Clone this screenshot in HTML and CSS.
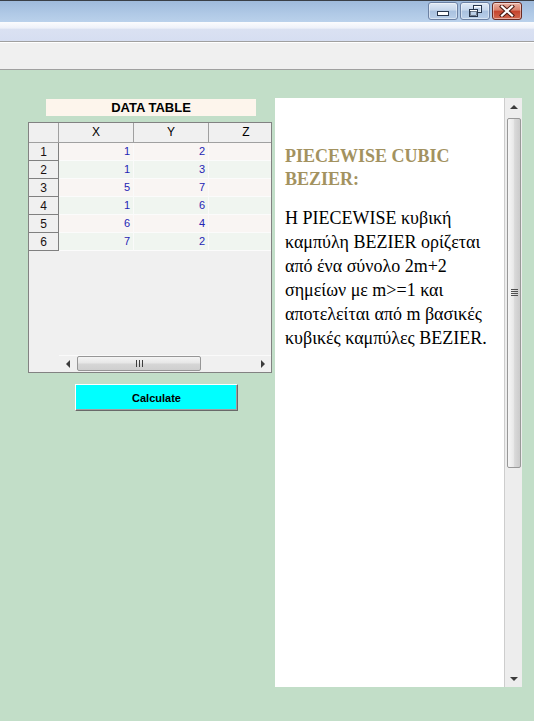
FILE: index.html
```html
<!DOCTYPE html>
<html lang="el">
<head>
<meta charset="utf-8">
<title>Piecewise Cubic Bezier</title>
<link rel="stylesheet" href="styles.css">
</head>
<body>
<div class="window">
  <div class="titlebar">
    <div class="tb-btn">
      <svg width="12" height="6" viewBox="0 0 12 6"><rect x="0.5" y="0.5" width="11" height="4" fill="#ffffff" stroke="#27364c"/></svg>
    </div>
    <div class="tb-btn">
      <svg width="13" height="12" viewBox="0 0 13 12">
        <rect x="4.5" y="0.5" width="8" height="7" fill="#ffffff" stroke="#27364c"/>
        <rect x="5.5" y="2.5" width="6" height="4" fill="#bcd0e8"/>
        <rect x="0.5" y="4.5" width="8" height="7" fill="#ffffff" stroke="#27364c"/>
        <rect x="1.5" y="6.5" width="6" height="4" fill="#bcd0e8" stroke="#27364c" stroke-width="0.6"/>
      </svg>
    </div>
    <div class="tb-btn close">
      <svg width="16" height="12" viewBox="0 0 16 12">
        <path d="M3 1.5 L13 10.5 M13 1.5 L3 10.5" stroke="#4a1a12" stroke-width="4.2" stroke-linecap="square"/>
        <path d="M3 1.5 L13 10.5 M13 1.5 L3 10.5" stroke="#ffffff" stroke-width="2.2" stroke-linecap="square"/>
      </svg>
    </div>
  </div>
  <div class="menubar"></div>
  <div class="toolbar"></div>

  <div class="content">
    <div class="left">
      <div class="dt-label">DATA TABLE</div>
      <div class="grid">
        <div class="cells">
          <div class="hd corner"></div>
          <div class="hd">X</div>
          <div class="hd">Y</div>
          <div class="hd">Z</div>

          <div class="rh">1</div><div class="dc odd">1</div><div class="dc odd">2</div><div class="dc odd"></div>
          <div class="rh">2</div><div class="dc even">1</div><div class="dc even">3</div><div class="dc even"></div>
          <div class="rh">3</div><div class="dc odd">5</div><div class="dc odd">7</div><div class="dc odd"></div>
          <div class="rh">4</div><div class="dc even">1</div><div class="dc even">6</div><div class="dc even"></div>
          <div class="rh">5</div><div class="dc odd">6</div><div class="dc odd">4</div><div class="dc odd"></div>
          <div class="rh">6</div><div class="dc even">7</div><div class="dc even">2</div><div class="dc even"></div>
        </div>
        <div class="hscroll">
          <div class="sb-arrow"><span class="tri-left"></span></div>
          <div class="h-thumb"><span class="grip-v"></span></div>
          <div class="h-track"></div>
          <div class="sb-arrow"><span class="tri-right"></span></div>
        </div>
      </div>
      <button class="calc" type="button">Calculate</button>
    </div>

    <div class="panel">
      <div class="ptext">
        <h2 class="ptitle">PIECEWISE CUBIC<br>BEZIER:</h2>
        <p class="pbody">Η PIECEWISE κυβική<br>καμπύλη BEZIER ορίζεται<br>από ένα σύνολο 2m+2<br>σημείων με m&gt;=1 και<br>αποτελείται από m βασικές<br>κυβικές καμπύλες BEZIER.</p>
      </div>
      <div class="vscroll">
        <div class="v-arrow"><span class="tri-up"></span></div>
        <div class="v-thumb"><span class="grip-h"></span></div>
        <div class="v-track"></div>
        <div class="v-arrow"><span class="tri-down"></span></div>
      </div>
    </div>
  </div>
</div>
</body>
</html>
```

FILE: styles.css
```css
* { box-sizing: border-box; }
html, body { margin: 0; padding: 0; }
body {
  width: 534px;
  height: 721px;
  overflow: hidden;
  background: #c2dec8;
  font-family: "Liberation Sans", Arial, sans-serif;
}
.window { width: 534px; height: 721px; display: flex; flex-direction: column; }

/* title bar */
.titlebar {
  height: 22px;
  flex: none;
  border-top: 1px solid #3a3f46;
  background: linear-gradient(#9fbadb, #b0c9e6 60%, #bad1eb);
  display: flex;
  justify-content: flex-end;
  align-items: flex-start;
  gap: 2px;
  padding: 1px 12px 0 0;
}
.tb-btn {
  width: 30px;
  height: 18px;
  border: 1px solid #6c81a3;
  border-radius: 3px;
  background: linear-gradient(#dfe9f5, #c5d6eb 45%, #a9c1df 50%, #b9cfe9);
  display: flex;
  align-items: center;
  justify-content: center;
  box-shadow: inset 0 0 0 1px rgba(255,255,255,0.45);
}
.tb-btn:first-child svg { margin-top: 5px; }
.tb-btn.close {
  border-color: #6a2a22;
  background: linear-gradient(#eab3a5, #d8806c 45%, #c4432c 50%, #d2684f);
}

.menubar {
  height: 20px;
  flex: none;
  border-bottom: 1px solid #a0a0a0;
  background: linear-gradient(#fbfcfe, #eef1f9 32%, #dae1f2 38%, #d6def1);
}
.toolbar {
  height: 28px;
  flex: none;
  border-top: 1px solid #ffffff;
  border-bottom: 1px solid #a0a0a0;
  background: #f0f0f0;
}

/* content */
.content {
  flex: 1;
  display: flex;
  align-items: flex-start;
  padding: 28px 0 0 28px;
}
.left { width: 244px; display: flex; flex-direction: column; }
.dt-label {
  margin: 1px 0 0 18px;
  width: 210px;
  height: 17px;
  line-height: 17px;
  background: #fdf5ec;
  text-align: center;
  font-weight: bold;
  font-size: 13px;
  color: #000;
}

.grid {
  margin-top: 6px;
  width: 244px;
  height: 251px;
  border: 1px solid #828282;
  background: #f0f0f0;
  overflow: hidden;
  display: flex;
  flex-direction: column;
}
.cells {
  display: grid;
  grid-template-columns: 30px 75px 75px 75px;
  grid-template-rows: 20px repeat(6, 18px);
  width: 255px;
  font-size: 11px;
}
.hd {
  background: #f0f0f0;
  border-right: 1px solid #a0a0a0;
  border-bottom: 1px solid #a0a0a0;
  text-align: center;
  line-height: 19px;
  color: #000;
  font-size: 12px;
}
.rh {
  background: #f0f0f0;
  border-right: 1px solid #808080;
  border-bottom: 1px solid #808080;
  text-align: center;
  line-height: 18px;
  font-size: 12px;
  color: #1a1010;
}
.dc {
  border-right: 1px solid #fafafa;
  border-bottom: 1px solid #fbfbfb;
  text-align: right;
  padding-right: 3px;
  line-height: 17px;
  color: #2424b4;
}
.dc.odd { background: #f9f5f3; }
.dc.even { background: #f0f5f0; }

.hscroll {
  margin-top: auto;
  margin-left: 30px;
  height: 17px;
  display: flex;
  border-top: 1px solid #fafafa;
  background: #f0f0f0;
}
.sb-arrow {
  width: 17px;
  display: flex;
  align-items: center;
  justify-content: center;
}
.tri-left, .tri-right, .tri-up, .tri-down { display: block; width: 0; height: 0; }
.tri-left { border-top: 4px solid transparent; border-bottom: 4px solid transparent; border-right: 4px solid #3c3c3c; }
.tri-right { border-top: 4px solid transparent; border-bottom: 4px solid transparent; border-left: 4px solid #3c3c3c; }
.h-thumb {
  width: 124px;
  margin: 0 0 1px 1px;
  border: 1px solid #969696;
  border-radius: 2px;
  background: linear-gradient(#f4f4f4, #e6e6e6 48%, #d6d6d6 52%, #cfcfcf);
  display: flex;
  align-items: center;
  justify-content: center;
}
.grip-v {
  display: block;
  width: 7px;
  height: 7px;
  background: repeating-linear-gradient(90deg, #3e3e3e 0 1px, transparent 1px 3px);
}
.h-track { flex: 1; }

.calc {
  margin: 11px 0 0 47px;
  width: 163px;
  height: 27px;
  padding: 0;
  background: #00ffff;
  border: 1px solid;
  border-color: #ffffff #6a6a6a #6a6a6a #ffffff;
  box-shadow: inset -1px -1px 0 #a0a0a0;
  font-family: "Liberation Sans", Arial, sans-serif;
  font-weight: bold;
  font-size: 11px;
  color: #000;
}

/* right html pane */
.panel {
  margin-left: 3px;
  width: 247px;
  height: 589px;
  display: flex;
  background: #ffffff;
}
.ptext {
  flex: 1;
  padding: 47px 0 0 10px;
  font-family: "Liberation Serif", "DejaVu Serif", "Noto Serif", "FreeSerif", serif;
  color: #000;
}
.ptitle {
  margin: 0;
  font-size: 18px;
  line-height: 23px;
  font-weight: bold;
  color: #a3925f;
}
.pbody {
  margin: 15px 0 0 0;
  font-size: 18px;
  line-height: 24px;
  white-space: nowrap;
}
.vscroll {
  width: 18px;
  border-left: 1px solid #cdcdcd;
  background: #ededed;
  display: flex;
  flex-direction: column;
}
.v-arrow {
  height: 17px;
  display: flex;
  align-items: center;
  justify-content: center;
}
.tri-up { border-left: 4px solid transparent; border-right: 4px solid transparent; border-bottom: 4px solid #3c3c3c; }
.tri-down { border-left: 4px solid transparent; border-right: 4px solid transparent; border-top: 4px solid #3c3c3c; }
.v-thumb {
  margin: 3px 1px 0 2px;
  height: 350px;
  border: 1px solid #989898;
  border-radius: 2px;
  background: linear-gradient(90deg, #f6f6f6, #e9e9e9 45%, #d9d9d9 55%, #cbcbcb);
  display: flex;
  align-items: center;
  justify-content: center;
}
.grip-h {
  display: block;
  width: 7px;
  height: 8px;
  background: repeating-linear-gradient(180deg, #505050 0 1px, transparent 1px 2px);
}
.v-track { flex: 1; }
```
